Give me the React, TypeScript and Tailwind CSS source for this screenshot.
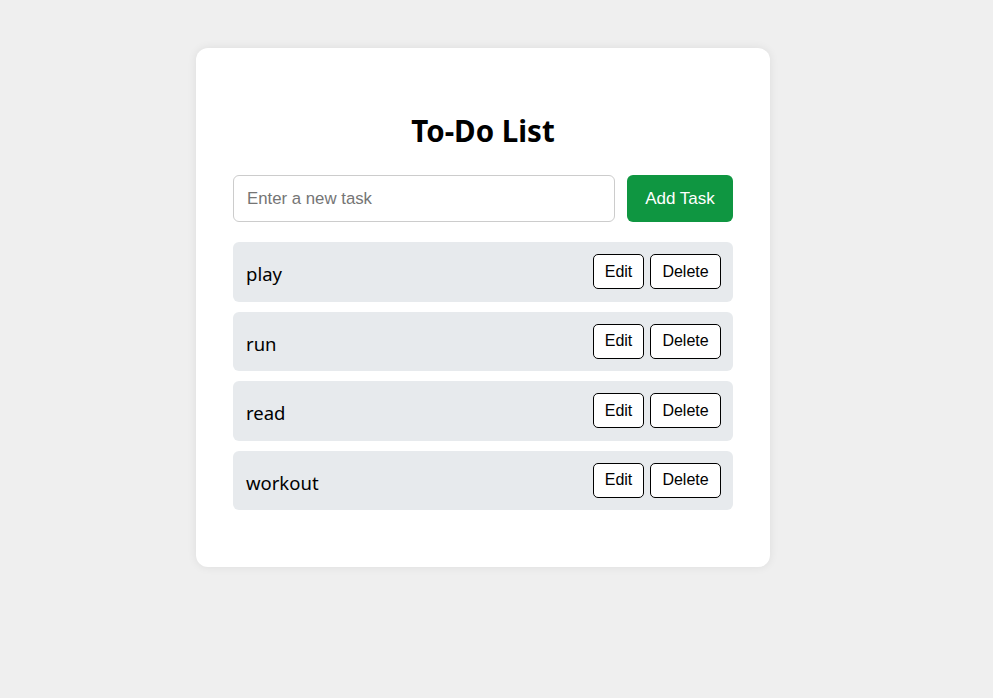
import React, { useState } from 'react';

type Task = { id: number; text: string };

const initialTasks: Task[] = [
  { id: 1, text: 'play' },
  { id: 2, text: 'run' },
  { id: 3, text: 'read' },
  { id: 4, text: 'workout' },
];

export default function App() {
  const [tasks, setTasks] = useState<Task[]>(initialTasks);
  const [newTask, setNewTask] = useState('');

  const addTask = () => {
    if (!newTask.trim()) return;
    setTasks([...tasks, { id: Date.now(), text: newTask.trim() }]);
    setNewTask('');
  };

  const deleteTask = (id: number) => setTasks(tasks.filter(t => t.id !== id));

  const editTask = (id: number) => {
    const t = tasks.find(x => x.id === id);
    const text = window.prompt('Edit task', t?.text ?? '');
    if (text && text.trim()) {
      setTasks(tasks.map(x => (x.id === id ? { ...x, text: text.trim() } : x)));
    }
  };

  return (
    <div className="min-h-[698px] bg-[#efefef] pt-[48px] font-['Noto_Sans',sans-serif]">
      <div className="ml-[196px] w-[574px] bg-white rounded-xl shadow-[0_0_10px_rgba(0,0,0,0.08)] px-[37px] pt-[66px] pb-[57px]">
        <h1 className="text-center text-[29.5px] leading-[34px] font-bold text-black">To-Do List</h1>

        <div className="flex gap-3 mt-[27px]">
          <input
            value={newTask}
            onChange={e => setNewTask(e.target.value)}
            placeholder="Enter a new task"
            className="flex-1 min-w-0 h-[47px] border border-[#cccccc] rounded-md px-[13px] text-[16.8px] font-['Liberation_Sans',Arial,sans-serif] placeholder-[#757575] outline-none"
          />
          <button
            onClick={addTask}
            className="w-[106px] h-[47px] bg-[#0f9641] text-white rounded-md text-[17px] font-['Liberation_Sans',Arial,sans-serif]"
          >
            Add Task
          </button>
        </div>

        <ul className="mt-5 flex flex-col gap-[10px]">
          {tasks.map(task => (
            <li key={task.id} className="h-[59.5px] bg-[#e7eaed] rounded-md flex items-center justify-between pl-[13px] pr-3">
              <span className="text-[18.5px] text-black pt-[5px]">{task.text}</span>
              <div className="flex gap-1.5 font-['Liberation_Sans',Arial,sans-serif] text-[16px]">
                <button onClick={() => editTask(task.id)} className="h-[35px] w-[51px] bg-white border border-black rounded-[5px] text-black">
                  Edit
                </button>
                <button onClick={() => deleteTask(task.id)} className="h-[35px] w-[71px] bg-white border border-black rounded-[5px] text-black">
                  Delete
                </button>
              </div>
            </li>
          ))}
        </ul>
      </div>
    </div>
  );
}
